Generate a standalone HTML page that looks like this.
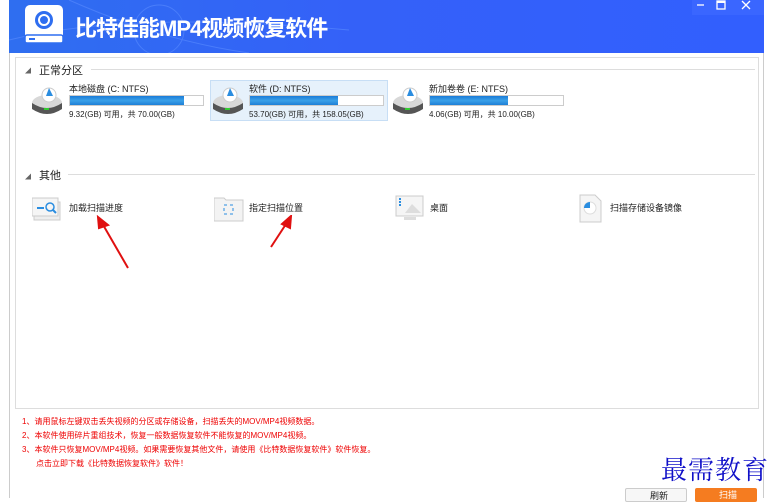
<!DOCTYPE html>
<html><head><meta charset="utf-8"><style>
*{margin:0;padding:0;box-sizing:border-box}
body{width:782px;height:498px;background:#fff;position:relative;overflow:hidden;font-family:"Liberation Sans","Noto Sans CJK SC",sans-serif;font-size:9px;color:#222}
.abs{position:absolute}
.title{left:9px;top:0;width:755px;height:53px;background:linear-gradient(90deg,#2f6ef0 0%,#3461f8 45%,#325ffe 100%)}
.ctrl{left:692px;top:0;width:72px;height:15px;background:#3a66ff}
.win{left:9px;top:53px;width:755px;height:445px;border-left:1px solid #ccc;border-right:1px solid #ccc}
.panel{left:15px;top:57px;width:744px;height:352px;border:1px solid #ddd}
.hdr{font-size:11px;color:#222}
.line{height:1px;background:#ddd}
.bar{height:11px;border:1px solid #ccc;background:#fff}
.bar i{display:block;height:100%;background:linear-gradient(#1a7bd8,#3aa0e8 50%,#1e7fd6)}
.red{color:#e00;font-size:8px;left:22px}
</style></head><body>
<div class="abs title"></div>
<svg class="abs" style="left:9px;top:0" width="340" height="53">
<g stroke="#5a8cff" stroke-width="1" fill="none" opacity=".6"><path d="M0 40 Q120 10 340 30"/><path d="M60 0 Q150 40 240 53"/><circle cx="150" cy="30" r="25"/></g>
<rect x="16" y="5" width="38" height="38" rx="5" fill="#fff"/>
<rect x="16" y="35" width="38" height="8" rx="2" fill="#fff" stroke="#2f6ef0" stroke-width="1.5"/>
<rect x="20" y="38" width="6" height="2" fill="#2f6ef0"/>
<circle cx="35" cy="20" r="9" fill="#2f6ef0"/><circle cx="35" cy="20" r="5" fill="none" stroke="#fff" stroke-width="2"/>
</svg>
<div class="abs" style="left:75px;top:11px;color:#fff;font-size:22px;font-weight:bold;letter-spacing:-1px">比特佳能MP4视频恢复软件</div>
<div class="abs ctrl"></div>
<svg class="abs" style="left:692px;top:0" width="72" height="15" stroke="#fff" stroke-width="1.3" fill="none"><path d="M5 5H12"/><rect x="25" y="1" width="8" height="8"/><path d="M25 2H33" stroke-width="2"/><path d="M50 1L58 9M58 1L50 9"/></svg>
<div class="abs win"></div>
<div class="abs panel"></div>
<div class="abs" style="left:25px;top:66px;font-size:6px;color:#666">◢</div>
<div class="abs hdr" style="left:39px;top:62px">正常分区</div>
<div class="abs line" style="left:91px;top:69px;width:664px"></div>
<div class="abs" style="left:25px;top:172px;font-size:6px;color:#666">◢</div>
<div class="abs hdr" style="left:39px;top:167px">其他</div>
<div class="abs line" style="left:68px;top:174px;width:687px"></div>
<div class="abs" style="left:210px;top:80px;width:178px;height:41px;background:#e6f1fb;border:1px solid #c7def5"></div>
<!-- disks -->
<svg width="0" height="0" style="position:absolute"><defs><g id="dk"><ellipse cx="16" cy="20" rx="15" ry="8" fill="#d8d8d8"/><path d="M1 20 L1 26 Q16 36 31 26 L31 20 Q16 30 1 20Z" fill="#555"/><rect x="13" y="25" width="5" height="2" fill="#3c3"/><circle cx="18" cy="12" r="7" fill="#fff" stroke="#ccc"/><path d="M18 5 L22 13 L15 13Z" fill="#2a8de0"/></g></defs></svg>
<svg class="abs" style="left:31px;top:83px" width="34" height="36"><use href="#dk"/></svg>
<svg class="abs" style="left:212px;top:83px" width="34" height="36"><use href="#dk"/></svg>
<svg class="abs" style="left:392px;top:83px" width="34" height="36"><use href="#dk"/></svg>
<div class="abs" style="left:69px;top:82px">本地磁盘 (C: NTFS)</div>
<div class="abs bar" style="left:69px;top:95px;width:135px"><i style="width:86%"></i></div>
<div class="abs" style="left:69px;top:109px;font-size:8px">9.32(GB) 可用，共 70.00(GB)</div>
<div class="abs" style="left:249px;top:82px">软件 (D: NTFS)</div>
<div class="abs bar" style="left:249px;top:95px;width:135px"><i style="width:66%"></i></div>
<div class="abs" style="left:249px;top:109px;font-size:8px">53.70(GB) 可用，共 158.05(GB)</div>
<div class="abs" style="left:429px;top:82px">新加卷卷 (E: NTFS)</div>
<div class="abs bar" style="left:429px;top:95px;width:135px"><i style="width:59%"></i></div>
<div class="abs" style="left:429px;top:109px;font-size:8px">4.06(GB) 可用，共 10.00(GB)</div>
<!-- others -->
<svg class="abs" style="left:32px;top:196px" width="32" height="26"><rect x="2" y="6" width="26" height="18" fill="#eee" stroke="#ccc"/><rect x="0" y="2" width="26" height="18" fill="#f5f5f5" stroke="#ccc"/><path d="M5 12H12" stroke="#2a8de0" stroke-width="2"/><circle cx="18" cy="11" r="4" fill="none" stroke="#2a8de0" stroke-width="1.5"/><path d="M21 14L24 17" stroke="#2a8de0" stroke-width="2"/></svg>
<div class="abs" style="left:69px;top:201px">加载扫描进度</div>
<svg class="abs" style="left:214px;top:196px" width="30" height="26"><path d="M0 2H10L12 4H29V25H0Z" fill="#f3f3f3" stroke="#ccc"/><rect x="10" y="9" width="9" height="9" fill="none" stroke="#2a8de0" stroke-dasharray="3 3"/></svg>
<div class="abs" style="left:249px;top:201px">指定扫描位置</div>
<svg class="abs" style="left:395px;top:195px" width="30" height="28"><rect x="1" y="1" width="27" height="20" fill="#f5f5f5" stroke="#ccc"/><path d="M10 18L17 9L26 18Z" fill="#ddd"/><path d="M5 3V12" stroke="#2a8de0" stroke-width="2" stroke-dasharray="2 1"/><rect x="9" y="22" width="12" height="3" fill="#ddd"/></svg>
<div class="abs" style="left:430px;top:201px">桌面</div>
<svg class="abs" style="left:579px;top:194px" width="24" height="30"><path d="M1 1H16L22 7V28H1Z" fill="#f5f5f5" stroke="#ccc"/><circle cx="11" cy="14" r="6" fill="#fff" stroke="#ddd"/><path d="M11 14V8A6 6 0 0 0 5 14Z" fill="#2a8de0"/></svg>
<div class="abs" style="left:610px;top:201px">扫描存储设备镜像</div>
<!-- arrows -->
<svg class="abs" style="left:90px;top:215px" width="220" height="60" stroke="#e01010" stroke-width="2" fill="#e01010"><path d="M38 53L12 8"/><path d="M8 2L18 10L9 13Z"/><path d="M181 32L198 6"/><path d="M201 1L200 13L192 9Z"/></svg>
<div class="abs red" style="top:416px">1、请用鼠标左键双击丢失视频的分区或存储设备，扫描丢失的MOV/MP4视频数据。</div>
<div class="abs red" style="top:430px">2、本软件使用碎片重组技术，恢复一般数据恢复软件不能恢复的MOV/MP4视频。</div>
<div class="abs red" style="top:444px">3、本软件只恢复MOV/MP4视频。如果需要恢复其他文件，请使用《比特数据恢复软件》软件恢复。</div>
<div class="abs red" style="top:458px;left:36px">点击立即下载《比特数据恢复软件》软件！</div>
<div class="abs" style="left:661px;top:450px;font-family:'Noto Serif CJK SC',serif;font-size:26px;color:#1010c8;letter-spacing:1px">最需教育</div>
<div class="abs" style="left:625px;top:488px;width:62px;height:14px;border:1px solid #ccc;border-radius:2px;background:#f7f7f7;font-size:9px;padding-left:24px">刷新</div>
<div class="abs" style="left:695px;top:488px;width:62px;height:14px;border-radius:2px;background:#f57c20;color:#fff;font-size:9px;padding-left:24px">扫描</div>
</body></html>
